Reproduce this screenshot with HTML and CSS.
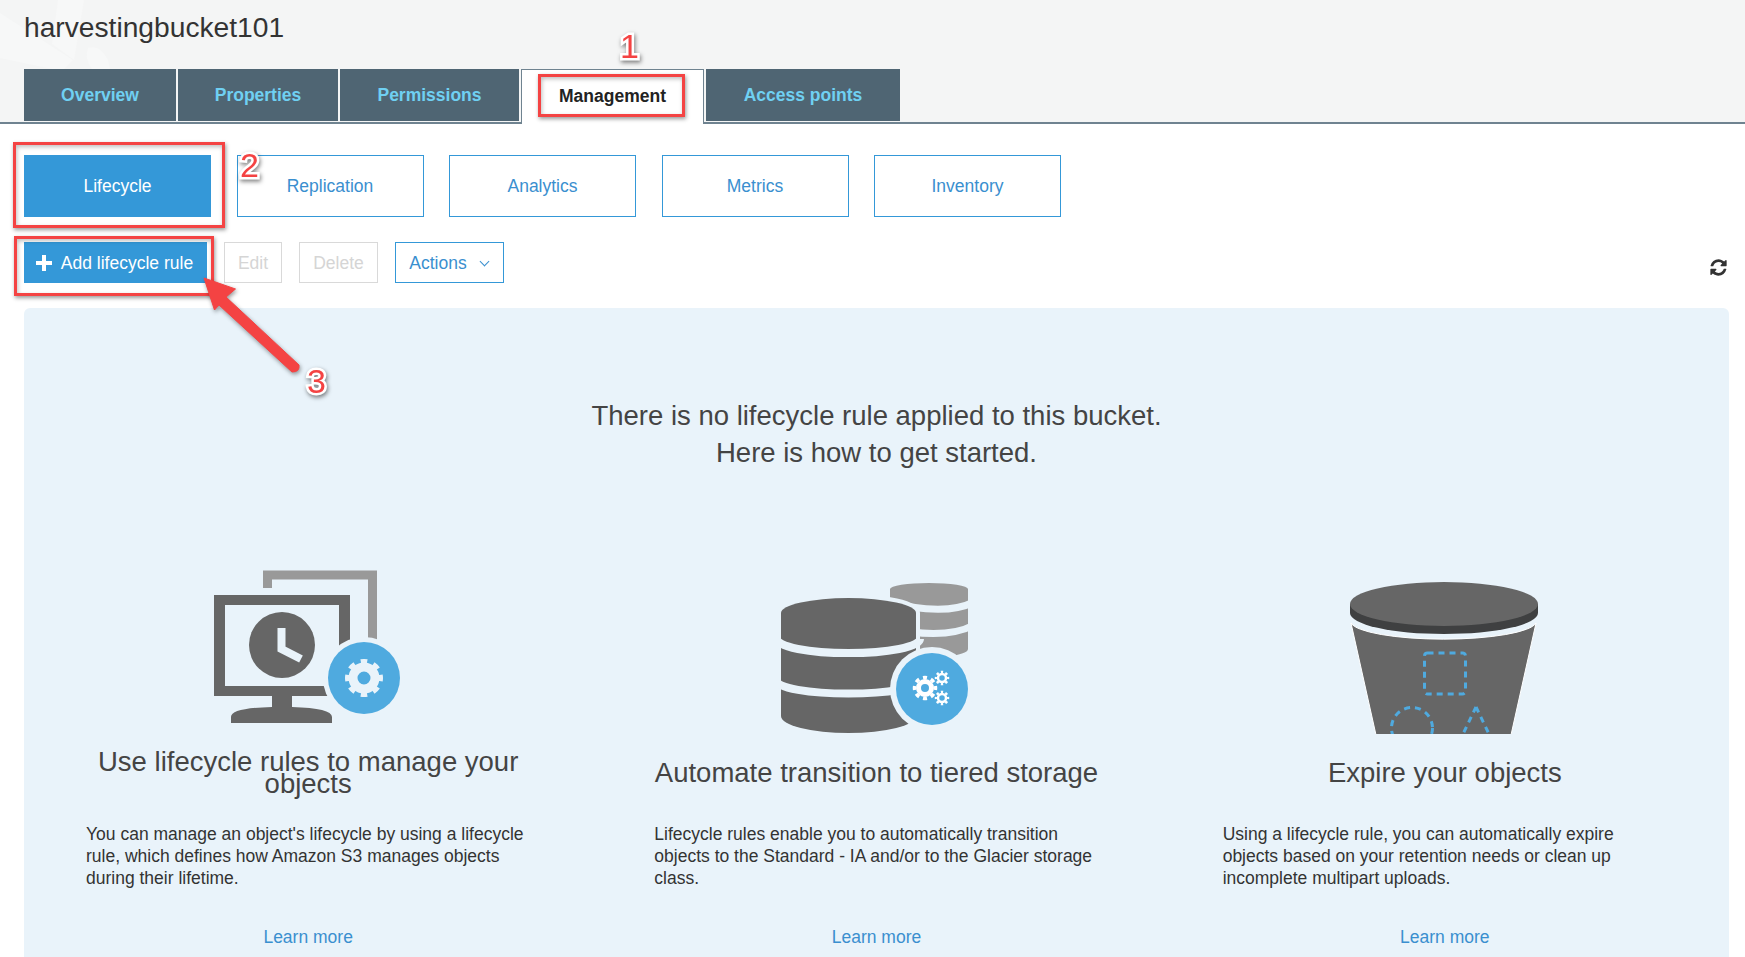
FILE: index.html
```html
<!DOCTYPE html>
<html lang="en">
<head>
    <meta charset="UTF-8">
    <meta name="viewport" content="width=device-width, initial-scale=1.0">
    <title>harvestingbucket101 - Management</title>
    <link rel="stylesheet" href="styles.css">
</head>
<body>

<div class="page-head">
    <svg class="head-bg" viewBox="0 0 150 122">
        <path fill="#f7f8f8" d="M0 13L73 60L62 71L0 58Z"/>
        <path fill="#f7f8f8" d="M84 0L74 60L52 44L58 0Z"/>
        <path fill="#f7f8f8" d="M88 48Q100 44 108 60L110 69H92Q84 58 88 48Z"/>
    </svg>
    <h1>harvestingbucket101</h1>
    <div class="tabs">
        <a class="tab tab-overview">Overview</a>
        <a class="tab tab-properties">Properties</a>
        <a class="tab tab-permissions">Permissions</a>
        <a class="tab tab-management active">Management</a>
        <a class="tab tab-access">Access points</a>
    </div>
</div>

<div class="sub-tabs">
    <a class="sub-tab active">Lifecycle</a>
    <a class="sub-tab">Replication</a>
    <a class="sub-tab">Analytics</a>
    <a class="sub-tab">Metrics</a>
    <a class="sub-tab">Inventory</a>
</div>

<div class="toolbar">
    <button class="btn btn-primary"><span class="plus"></span>Add lifecycle rule</button>
    <button class="btn btn-disabled btn-edit">Edit</button>
    <button class="btn btn-disabled btn-delete">Delete</button>
    <button class="btn btn-outline">Actions<span class="chevron"></span></button>
    <svg class="refresh" viewBox="0 0 1792 1792"><path d="M1639 1056q0 5-1 7-64 268-268 434.5t-478 166.5q-146 0-282.5-55t-243.5-157l-129 129q-19 19-45 19t-45-19-19-45v-448q0-26 19-45t45-19h448q26 0 45 19t19 45-19 45l-137 137q71 66 161 102t187 36q134 0 250-65t186-179q11-17 53-117 8-23 30-23h192q13 0 22.5 9.5t9.5 22.5zm25-800v448q0 26-19 45t-45 19h-448q-26 0-45-19t-19-45 19-45l138-138q-148-137-349-137-134 0-250 65t-186 179q-11 17-53 117-8 23-30 23h-199q-13 0-22.5-9.5t-9.5-22.5v-7q65-268 270-434.5t480-166.5q146 0 284 55.5t245 156.5l130-129q19-19 45-19t45 19 19 45z"/></svg>
</div>

<div class="panel">
    <p class="intro">There is no lifecycle rule applied to this bucket.<br>Here is how to get started.</p>

    <div class="columns">
        <div class="col">
            <svg class="col-icon" viewBox="188 560 240 173">
                <path d="M267.5 587V574H372.5V640" fill="none" stroke="#999" stroke-width="9"/>
                <path fill-rule="evenodd" fill="#666" d="M214 594H350V695H214ZM225 604V685H339V604Z"/>
                <path fill="#666" d="M272 695H292V706Q332 707 332 716V722H231V716Q231 707 272 706Z"/>
                <circle cx="282" cy="644" r="33" fill="#666"/>
                <path d="M281.500 627V648L301 658" fill="none" stroke="#e9f3fa" stroke-width="8"/>
                <circle cx="364" cy="677" r="41" fill="#e9f3fa"/>
                <circle cx="364" cy="677" r="36" fill="#4faadf"/>
                <circle cx="364" cy="677" r="11" fill="none" stroke="#e9f3fa" stroke-width="9"/>
                <circle cx="364" cy="677" r="16.500" fill="none" stroke="#e9f3fa" stroke-width="5" pathLength="16" stroke-dasharray="1 1" stroke-dashoffset="0.5"/>
            </svg>
            <h3>Use lifecycle rules to manage your objects</h3>
            <p>You can manage an object's lifecycle by using a lifecycle rule, which defines how Amazon S3 manages objects during their lifetime.</p>
            <a class="learn">Learn more</a>
        </div>
        <div class="col">
            <svg class="col-icon" viewBox="757 560 240 173">
                <path fill="#999" d="M891 588A39 6 0 0 1 969 588V648Q969 653 945 656H891Z"/>
                <path d="M885 600Q945 616 975 601M885 626Q945 640 975 624" fill="none" stroke="#e9f3fa" stroke-width="7"/>
                <path fill="#666" stroke="#e9f3fa" stroke-width="8" paint-order="stroke" d="M782 612A67.500 15 0 0 1 917 612V715A67.500 17 0 0 1 782 715Z"/>
                <path d="M778 638A71 14 0 0 0 921 638M778 680A71 12.500 0 0 0 921 680" fill="none" stroke="#e9f3fa" stroke-width="8"/>
                <circle cx="933" cy="688" r="42" fill="#e9f3fa"/>
                <circle cx="933" cy="688" r="36" fill="#4faadf"/>
                <circle cx="926" cy="687" r="6.500" fill="none" stroke="#fff" stroke-width="5"/>
                <circle cx="926" cy="687" r="10.500" fill="none" stroke="#fff" stroke-width="3.500" pathLength="16" stroke-dasharray="1 1" stroke-dashoffset="0.5"/>
                <circle cx="943" cy="677" r="4" fill="none" stroke="#fff" stroke-width="2.500"/>
                <circle cx="943" cy="677" r="6" fill="none" stroke="#fff" stroke-width="2.500" pathLength="16" stroke-dasharray="1 1" stroke-dashoffset="0.5"/>
                <circle cx="943" cy="697" r="4" fill="none" stroke="#fff" stroke-width="2.500"/>
                <circle cx="943" cy="697" r="6" fill="none" stroke="#fff" stroke-width="2.500" pathLength="16" stroke-dasharray="1 1" stroke-dashoffset="0.5"/>
            </svg>
            <h3>Automate transition to tiered storage</h3>
            <p>Lifecycle rules enable you to automatically transition objects to the Standard - IA and/or to the Glacier storage class.</p>
            <a class="learn">Learn more</a>
        </div>
        <div class="col">
            <svg class="col-icon" viewBox="1326 560 240 173">
                <path fill="#666" stroke="#fff" d="M1352 622A93 18 0 0 0 1537 622L1512 734H1377Z"/>
                <ellipse cx="1445" cy="612" rx="94" ry="21" fill="#3f4041"/>
                <rect x="1351" y="603" width="188" height="9" fill="#3f4041"/>
                <ellipse cx="1445" cy="603" rx="94" ry="22" fill="#666"/>
                <g fill="none" stroke="#4faadf" stroke-width="3" stroke-dasharray="6 5">
                    <rect x="1425.500" y="652" width="41" height="41" rx="3"/>
                    <circle cx="1413" cy="727" r="20.500"/>
                    <path d="M1477 706L1464 733M1477 706L1490 733"/>
                </g>
            </svg>
            <h3>Expire your objects</h3>
            <p>Using a lifecycle rule, you can automatically expire objects based on your retention needs or clean up incomplete multipart uploads.</p>
            <a class="learn">Learn more</a>
        </div>
    </div>
</div>

<!-- callouts drawn on top of the screenshot -->
<div class="mark mark-1"></div>
<div class="mark mark-2"></div>
<div class="mark mark-3"></div>
<svg class="arrow" viewBox="0 0 1745 957">
    <path fill="#f44343" stroke="#f44343" stroke-linejoin="round" d="M204 278L235.500 289L226 297L299 365Q300 372 292 372L219 305L214.500 310Z"/>
</svg>
<span class="num num-1">1</span>
<span class="num num-2">2</span>
<span class="num num-3">3</span>

</body>
</html>
```

FILE: styles.css
```css
html, body {
    margin: 0;
    height: 100%;
    overflow: hidden;
}

body {
    position: relative;
    display: flex;
    flex-direction: column;
    font-family: "Liberation Sans", Arial, sans-serif;
    background-color: white;
    color: #444;
}

.page-head {
    position: relative;
    flex: none;
    height: 124px;
    box-sizing: border-box;
    padding: 10px 24px 0;
    background-color: #f4f5f5;
    border-bottom: 2px solid #6f8390;
}

.head-bg {
    position: absolute;
    left: 0;
    top: 0;
    width: 150px;
    height: 122px;
}

h1 {
    position: relative;
    margin: 0;
    height: 59px;
    font-size: 28.200px;
    line-height: 34px;
    font-weight: normal;
    color: #333;
}

.tabs {
    position: relative;
    display: flex;
    gap: 2px;
}

.tab {
    display: flex;
    align-items: center;
    justify-content: center;
    height: 52px;
    background-color: #4f6573;
    color: #6fd0f2;
    font-size: 17.500px;
    font-weight: bold;
}

.tab-overview { width: 152px; }
.tab-properties { width: 160px; }
.tab-permissions { width: 179px; }
.tab-management { width: 183px; }
.tab-access { width: 194px; }

.tab.active {
    box-sizing: border-box;
    height: 55px;
    padding-bottom: 2px;
    background-color: white;
    color: #222;
    border: 1px solid #6f8390;
    border-bottom: none;
    z-index: 1;
}

.sub-tabs {
    flex: none;
    display: flex;
    gap: 25.500px;
    margin: 31px 0 0 24px;
}

.sub-tab {
    display: flex;
    align-items: center;
    justify-content: center;
    box-sizing: border-box;
    width: 187px;
    height: 62px;
    padding-top: 1px;
    border: 1px solid #3498d8;
    color: #3a8fcf;
    font-size: 17.500px;
}

.sub-tab.active {
    background-color: #3498d8;
    color: white;
}

.toolbar {
    flex: none;
    display: flex;
    align-items: center;
    margin: 25px 17px 0 24px;
}

.btn {
    display: flex;
    align-items: center;
    justify-content: center;
    box-sizing: border-box;
    height: 41px;
    margin: 0 17px 0 0;
    padding: 1px 0 0;
    background: white;
    border: 1px solid #3498d8;
    font-family: inherit;
    font-size: 17.500px;
    color: #3a8fcf;
}

.btn-primary {
    width: 183px;
    padding-right: 2px;
    background-color: #3498d8;
    color: white;
}

.btn-disabled {
    border-color: #d9d9d9;
    color: #d5d5d5;
}

.btn-edit { width: 58px; }
.btn-delete { width: 79px; }
.btn-outline { width: 109px; margin-right: 0; }

.plus {
    width: 16px;
    height: 16px;
    margin-right: 9px;
    background:
        linear-gradient(white, white) center / 16px 4px no-repeat,
        linear-gradient(white, white) center / 4px 16px no-repeat;
}

.chevron {
    width: 6px;
    height: 6px;
    margin: -4px 2px 0 14px;
    border-right: 1.500px solid #3a8fcf;
    border-bottom: 1.500px solid #3a8fcf;
    transform: rotate(45deg);
}

.refresh {
    width: 19px;
    height: 19px;
    margin: 10px 0 0 auto;
    fill: #333;
}

.panel {
    flex: 1;
    margin: 25px 16px 0 24px;
    padding-top: 89px;
    background-color: #e9f3fa;
    border-radius: 6px 6px 0 0;
}

.intro {
    margin: 0;
    text-align: center;
    font-size: 27.500px;
    line-height: 37px;
    color: #444;
}

.columns {
    display: grid;
    grid-template-columns: repeat(3, 1fr);
    margin-top: 90px;
}

.col {
    display: flex;
    flex-direction: column;
    padding: 0 62px;
}

.col-icon {
    display: block;
    width: 240px;
    height: 173px;
    align-self: center;
}

h3 {
    display: flex;
    align-items: center;
    justify-content: center;
    height: 44px;
    margin: 17px -20px 0;
    text-align: center;
    font-size: 27.500px;
    line-height: 22px;
    font-weight: normal;
    color: #444;
}

.col p {
    margin: 28px 0 0;
    font-size: 17.500px;
    line-height: 22px;
    color: #333;
}

.learn {
    margin-top: 37px;
    text-align: center;
    font-size: 17.500px;
    line-height: 22px;
    color: #3a8fcf;
}

.mark {
    position: absolute;
    box-sizing: border-box;
    border: 3px solid #f44343;
    box-shadow: 1px 2px 4px rgba(0, 0, 0, 0.4), inset 1px 2px 4px rgba(0, 0, 0, 0.25);
    z-index: 2;
}

.mark-1 { left: 538px; top: 74px; width: 147px; height: 43px; }
.mark-2 { left: 13px; top: 142px; width: 212px; height: 86px; }
.mark-3 { left: 14px; top: 236px; width: 200px; height: 60px; }

.arrow {
    position: absolute;
    left: 0;
    top: 0;
    width: 1745px;
    height: 957px;
    filter: drop-shadow(1px 2px 2px rgba(0, 0, 0, 0.4));
    z-index: 3;
}

.num {
    position: absolute;
    font-size: 34px;
    line-height: 34px;
    color: #f44343;
    -webkit-text-stroke: 5px white;
    paint-order: stroke fill;
    filter: drop-shadow(1px 2px 2px rgba(0, 0, 0, 0.5));
    z-index: 4;
}

.num-1 { left: 620px; top: 29px; }
.num-2 { left: 240px; top: 148px; }
.num-3 { left: 307px; top: 364px; }
```
